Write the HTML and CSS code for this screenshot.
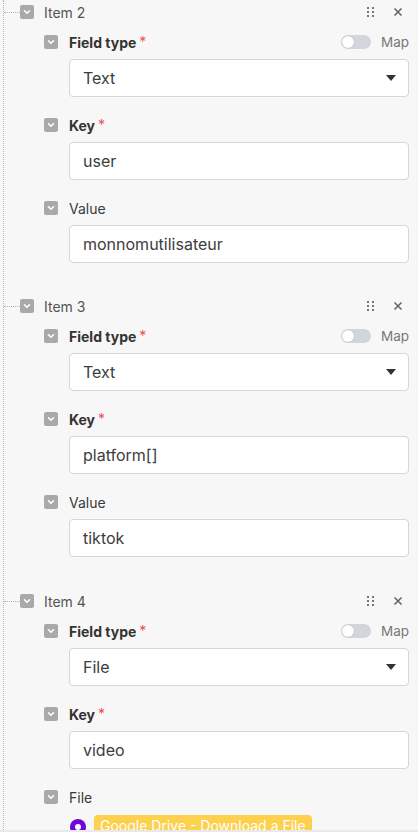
FILE: index.html
```html
<!DOCTYPE html>
<html lang="en">
<head>
    <meta charset="UTF-8">
    <meta name="viewport" content="width=device-width, initial-scale=1.0">
    <title>Body fields</title>
    <link rel="stylesheet" href="styles.css">
</head>
<body>
    <div class="panel">
        <div class="tree">

            <div class="item">
                <div class="item-head">
                    <span class="branch"></span>
                    <span class="chev"><svg viewBox="0 0 14 14"><path d="M4.5 5.8 7 8.3 9.5 5.8"/></svg></span>
                    <span class="item-title">Item 2</span>
                    <span class="handle"><i></i><i></i><i></i><i></i><i></i><i></i></span>
                    <span class="close"><svg viewBox="0 0 10 10"><path d="M1.5 1.5 8.5 8.5M8.5 1.5 1.5 8.5"/></svg></span>
                </div>
                <div class="field">
                    <div class="field-head">
                        <span class="chev"><svg viewBox="0 0 14 14"><path d="M4.5 5.8 7 8.3 9.5 5.8"/></svg></span>
                        <span class="label bold">Field type</span><span class="req">*</span>
                        <span class="map"><span class="toggle"></span>Map</span>
                    </div>
                    <div class="input select">Text<span class="caret"></span></div>
                </div>
                <div class="field">
                    <div class="field-head">
                        <span class="chev"><svg viewBox="0 0 14 14"><path d="M4.5 5.8 7 8.3 9.5 5.8"/></svg></span>
                        <span class="label bold">Key</span><span class="req">*</span>
                    </div>
                    <div class="input">user</div>
                </div>
                <div class="field">
                    <div class="field-head">
                        <span class="chev"><svg viewBox="0 0 14 14"><path d="M4.5 5.8 7 8.3 9.5 5.8"/></svg></span>
                        <span class="label">Value</span>
                    </div>
                    <div class="input">monnomutilisateur</div>
                </div>
            </div>

            <div class="item">
                <div class="item-head">
                    <span class="branch"></span>
                    <span class="chev"><svg viewBox="0 0 14 14"><path d="M4.5 5.8 7 8.3 9.5 5.8"/></svg></span>
                    <span class="item-title">Item 3</span>
                    <span class="handle"><i></i><i></i><i></i><i></i><i></i><i></i></span>
                    <span class="close"><svg viewBox="0 0 10 10"><path d="M1.5 1.5 8.5 8.5M8.5 1.5 1.5 8.5"/></svg></span>
                </div>
                <div class="field">
                    <div class="field-head">
                        <span class="chev"><svg viewBox="0 0 14 14"><path d="M4.5 5.8 7 8.3 9.5 5.8"/></svg></span>
                        <span class="label bold">Field type</span><span class="req">*</span>
                        <span class="map"><span class="toggle"></span>Map</span>
                    </div>
                    <div class="input select">Text<span class="caret"></span></div>
                </div>
                <div class="field">
                    <div class="field-head">
                        <span class="chev"><svg viewBox="0 0 14 14"><path d="M4.5 5.8 7 8.3 9.5 5.8"/></svg></span>
                        <span class="label bold">Key</span><span class="req">*</span>
                    </div>
                    <div class="input">platform[]</div>
                </div>
                <div class="field">
                    <div class="field-head">
                        <span class="chev"><svg viewBox="0 0 14 14"><path d="M4.5 5.8 7 8.3 9.5 5.8"/></svg></span>
                        <span class="label">Value</span>
                    </div>
                    <div class="input">tiktok</div>
                </div>
            </div>

            <div class="item">
                <div class="item-head">
                    <span class="branch"></span>
                    <span class="chev"><svg viewBox="0 0 14 14"><path d="M4.5 5.8 7 8.3 9.5 5.8"/></svg></span>
                    <span class="item-title">Item 4</span>
                    <span class="handle"><i></i><i></i><i></i><i></i><i></i><i></i></span>
                    <span class="close"><svg viewBox="0 0 10 10"><path d="M1.5 1.5 8.5 8.5M8.5 1.5 1.5 8.5"/></svg></span>
                </div>
                <div class="field">
                    <div class="field-head">
                        <span class="chev"><svg viewBox="0 0 14 14"><path d="M4.5 5.8 7 8.3 9.5 5.8"/></svg></span>
                        <span class="label bold">Field type</span><span class="req">*</span>
                        <span class="map"><span class="toggle"></span>Map</span>
                    </div>
                    <div class="input select">File<span class="caret"></span></div>
                </div>
                <div class="field">
                    <div class="field-head">
                        <span class="chev"><svg viewBox="0 0 14 14"><path d="M4.5 5.8 7 8.3 9.5 5.8"/></svg></span>
                        <span class="label bold">Key</span><span class="req">*</span>
                    </div>
                    <div class="input">video</div>
                </div>
                <div class="field">
                    <div class="field-head">
                        <span class="chev"><svg viewBox="0 0 14 14"><path d="M4.5 5.8 7 8.3 9.5 5.8"/></svg></span>
                        <span class="label">File</span>
                    </div>
                    <div class="mapped">
                        <span class="app-dot"></span>
                        <span class="tag">Google Drive - Download a File</span>
                    </div>
                </div>
            </div>

        </div>
    </div>
</body>
</html>
```

FILE: styles.css
```css
body {
    margin: 0;
    padding: 0;
    background-color: #f7f7f7;
    font-family: Inter, "Noto Sans", sans-serif;
    color: #333;
}

.panel {
    height: 830px;
    overflow: hidden;
    border-bottom: 2px solid #e9e9e9;
}

.tree {
    margin-left: 3px;
    border-left: 1px dotted #b5b5b5;
    padding-bottom: 40px;
}

.item {
    margin-bottom: 31px;
}

.item:nth-child(2) {
    margin-bottom: 32px;
}

.item-head {
    display: flex;
    align-items: center;
    height: 24px;
    padding-right: 15px;
}

.branch {
    width: 16px;
    border-top: 1px dotted #b5b5b5;
}

.chev {
    display: inline-flex;
    width: 14px;
    height: 14px;
    border-radius: 2px;
    background-color: #a9a9a9;
    flex-shrink: 0;
}

.chev svg {
    width: 14px;
    height: 14px;
    fill: none;
    stroke: #fff;
    stroke-width: 1.6;
    stroke-linecap: round;
    stroke-linejoin: round;
}

.item-title {
    margin-left: 10px;
    font-size: 14px;
    color: #555;
    flex: 1;
}

.handle {
    display: grid;
    grid-template-columns: 2px 2px;
    gap: 2px 3px;
    margin-right: 19px;
}

.handle i {
    width: 2px;
    height: 2px;
    background-color: #777;
}

.close svg {
    display: block;
    width: 10px;
    height: 10px;
    stroke: #666;
    stroke-width: 1.6;
}

.field {
    padding-left: 40px;
    padding-right: 9px;
    margin-top: 8px;
}

.field + .field {
    margin-top: 18px;
}

.field-head {
    display: flex;
    align-items: center;
    height: 20px;
    margin-bottom: 7px;
}

.label {
    margin-left: 11px;
    font-size: 14px;
    color: #3a3a3a;
}

.label.bold {
    font-weight: 700;
    color: #333;
}

.req {
    color: #ee4d5a;
    font-size: 14px;
    margin-left: 3px;
    align-self: flex-start;
    line-height: 19px;
}

.map {
    margin-left: auto;
    display: flex;
    align-items: center;
    font-size: 13.5px;
    color: #777;
}

.toggle {
    width: 30px;
    height: 14px;
    border-radius: 7px;
    background-color: #d2d6dc;
    margin-right: 10px;
    display: flex;
    align-items: center;
    padding-left: 1px;
    box-sizing: border-box;
}

.toggle::before {
    content: "";
    width: 12px;
    height: 12px;
    border-radius: 50%;
    background-color: #fff;
    box-shadow: 0 0 1px rgba(0, 0, 0, 0.3);
}

.input {
    margin-left: 25px;
    height: 38px;
    box-sizing: border-box;
    border: 1px solid #d6d6d6;
    border-radius: 4px;
    background-color: #fff;
    padding: 0 13px;
    display: flex;
    align-items: center;
    font-size: 16px;
    color: #3c3c3c;
}

.select {
    justify-content: space-between;
}

.caret {
    width: 0;
    height: 0;
    border-left: 5px solid transparent;
    border-right: 5px solid transparent;
    border-top: 6px solid #333;
    margin-right: -1px;
}

.mapped {
    margin-left: 25px;
    margin-top: 8px;
    display: flex;
    align-items: flex-start;
}

.app-dot {
    width: 16px;
    height: 16px;
    border-radius: 50%;
    background-color: #6f07d6;
    display: flex;
    align-items: center;
    justify-content: center;
    margin-left: 1px;
    margin-right: 8px;
    margin-top: 4px;
}

.app-dot::before {
    content: "";
    width: 6px;
    height: 6px;
    border-radius: 50%;
    background-color: #fff;
}

.tag {
    background-color: #fdd04d;
    color: #fff;
    font-size: 14px;
    padding: 0 6px;
    border-radius: 4px;
    line-height: 22px;
}
```
